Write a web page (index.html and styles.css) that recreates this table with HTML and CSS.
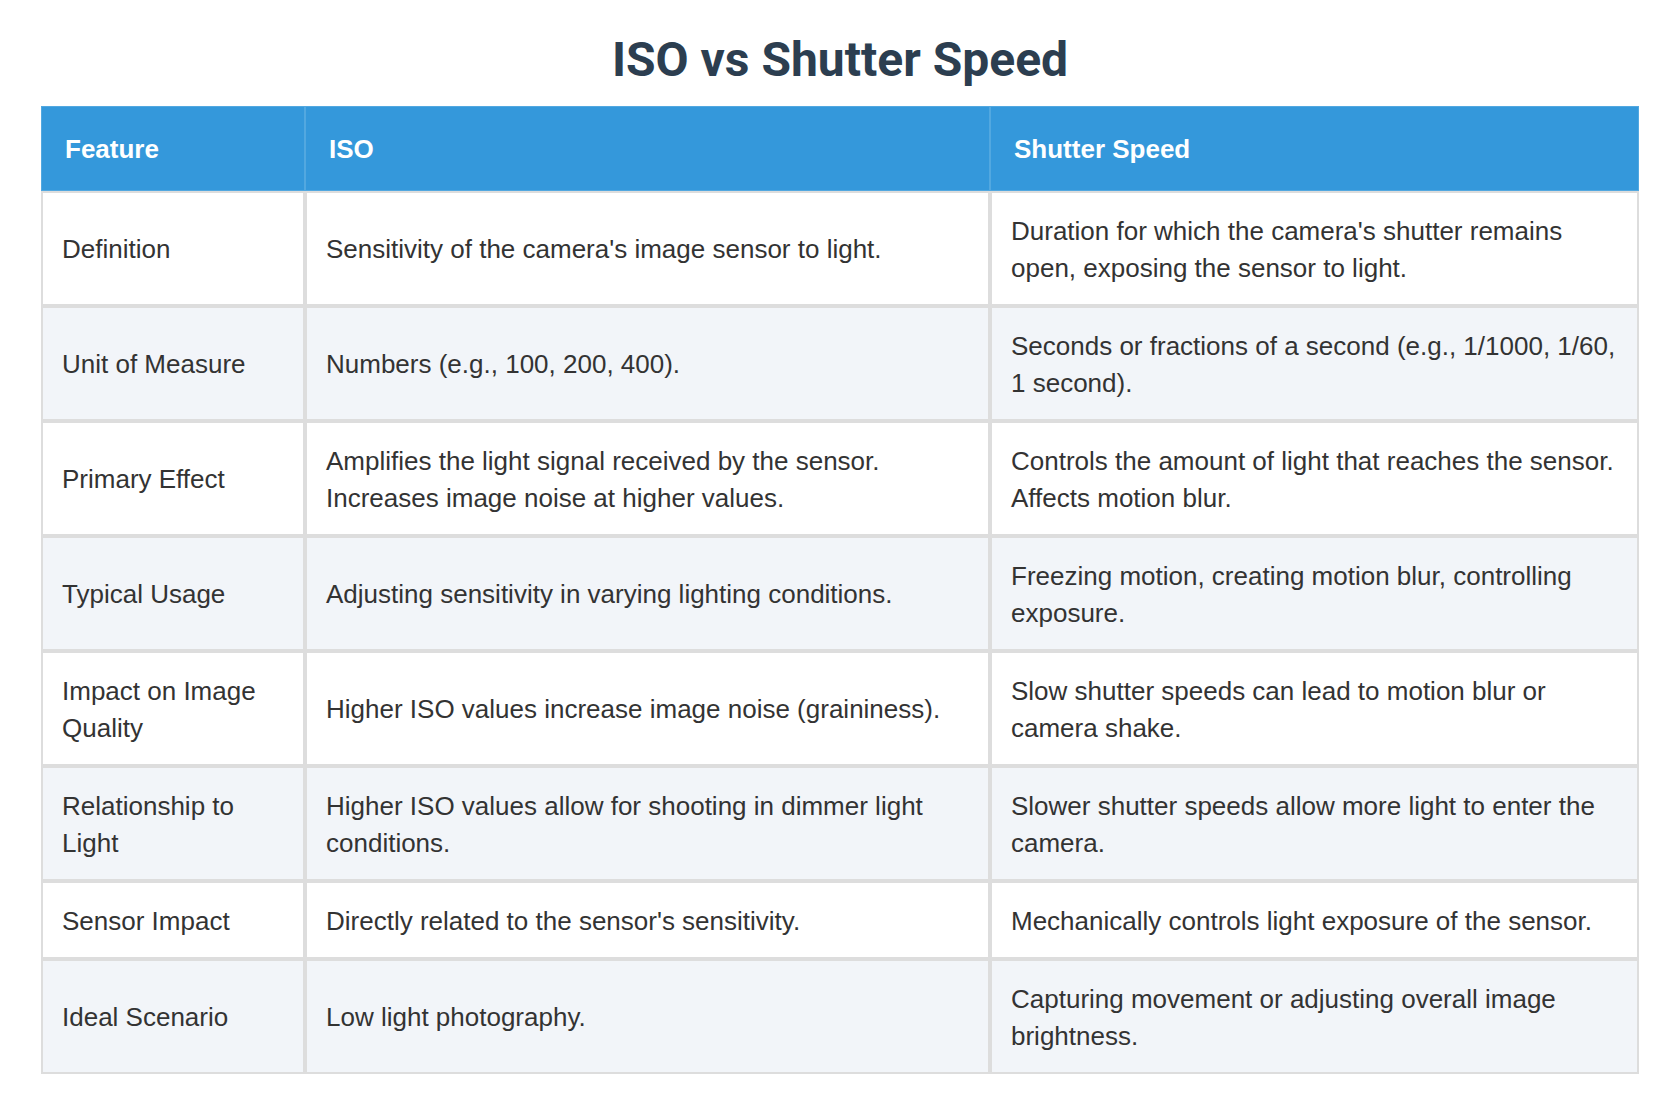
FILE: index.html
```html
<!DOCTYPE html>
<html lang="en">
<head>
<meta charset="utf-8">
<title>ISO vs Shutter Speed</title>
<link rel="stylesheet" href="styles.css">
</head>
<body>
<div class="page">
  <h1 class="title">ISO vs Shutter Speed</h1>
  <table class="compare">
    <colgroup>
      <col class="c1">
      <col class="c2">
      <col class="c3">
    </colgroup>
    <thead>
      <tr>
        <th>Feature</th>
        <th>ISO</th>
        <th>Shutter Speed</th>
      </tr>
    </thead>
    <tbody>
      <tr>
        <td>Definition</td>
        <td>Sensitivity of the camera's image sensor to light.</td>
        <td>Duration for which the camera's shutter remains open, exposing the sensor to light.</td>
      </tr>
      <tr>
        <td>Unit of Measure</td>
        <td>Numbers (e.g., 100, 200, 400).</td>
        <td>Seconds or fractions of a second (e.g., 1/1000, 1/60, 1 second).</td>
      </tr>
      <tr>
        <td>Primary Effect</td>
        <td>Amplifies the light signal received by the sensor. Increases image noise at higher values.</td>
        <td>Controls the amount of light that reaches the sensor. Affects motion blur.</td>
      </tr>
      <tr>
        <td>Typical Usage</td>
        <td>Adjusting sensitivity in varying lighting conditions.</td>
        <td>Freezing motion, creating motion blur, controlling exposure.</td>
      </tr>
      <tr>
        <td>Impact on Image Quality</td>
        <td>Higher ISO values increase image noise (graininess).</td>
        <td>Slow shutter speeds can lead to motion blur or camera shake.</td>
      </tr>
      <tr>
        <td>Relationship to Light</td>
        <td>Higher ISO values allow for shooting in dimmer light conditions.</td>
        <td>Slower shutter speeds allow more light to enter the camera.</td>
      </tr>
      <tr>
        <td>Sensor Impact</td>
        <td>Directly related to the sensor's sensitivity.</td>
        <td>Mechanically controls light exposure of the sensor.</td>
      </tr>
      <tr>
        <td>Ideal Scenario</td>
        <td>Low light photography.</td>
        <td>Capturing movement or adjusting overall image brightness.</td>
      </tr>
    </tbody>
  </table>
</div>
</body>
</html>
```

FILE: styles.css
```css
html, body {
  margin: 0;
  padding: 0;
  background: #ffffff;
}

.page {
  padding: 0 41px;
  font-family: "Liberation Sans", Arial, sans-serif;
  color: #333333;
}

.title {
  font-family: Roboto, "Liberation Sans", sans-serif;
  font-weight: 700;
  font-size: 48px;
  line-height: 56px;
  color: #2c3e50;
  text-align: center;
  margin: 32px 0 18px;
}

.compare {
  width: 1598px;
  table-layout: fixed;
  border-collapse: separate;
  border-spacing: 0;
  font-size: 26px;
  line-height: 37px;
}

.c1 { width: 264px; }
.c2 { width: 685px; }
.c3 { width: 649px; }

.compare th {
  background: #3498db;
  color: #ffffff;
  font-weight: 700;
  text-align: left;
  padding: 24px 20px 22px 23px;
  border: 1px solid #52a8e0;
}

.compare td {
  border: 2px solid #dddddd;
  padding: 19.5px 16px 17.5px 19px;
  vertical-align: middle;
  background: #ffffff;
}

.compare tbody tr:nth-child(even) td {
  background: #f2f5f9;
}
```
